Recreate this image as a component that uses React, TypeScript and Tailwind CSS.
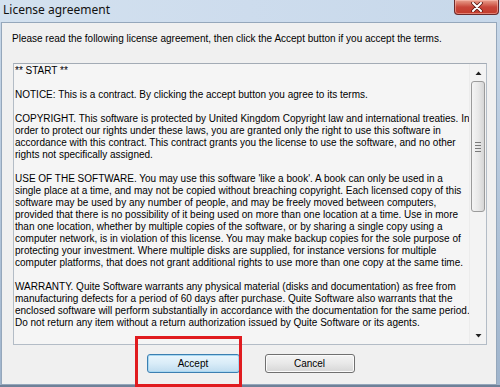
import React from "react";

const lines: string[] = [
  "** START **",
  "",
  "NOTICE: This is a contract. By clicking the accept button you agree to its terms.",
  "",
  "COPYRIGHT. This software is protected by United Kingdom Copyright law and international treaties. In",
  "order to protect our rights under these laws, you are granted only the right to use this software in",
  "accordance with this contract. This contract grants you the license to use the software, and no other",
  "rights not specifically assigned.",
  "",
  "USE OF THE SOFTWARE. You may use this software 'like a book'. A book can only be used in a",
  "single place at a time, and may not be copied without breaching copyright. Each licensed copy of this",
  "software may be used by any number of people, and may be freely moved between computers,",
  "provided that there is no possibility of it being used on more than one location at a time. Use in more",
  "than one location, whether by multiple copies of the software, or by sharing a single copy using a",
  "computer network, is in violation of this license. You may make backup copies for the sole purpose of",
  "protecting your investment. Where multiple disks are supplied, for instance versions for multiple",
  "computer platforms, that does not grant additional rights to use more than one copy at the same time.",
  "",
  "WARRANTY. Quite Software warrants any physical material (disks and documentation) as free from",
  "manufacturing defects for a period of 60 days after purchase. Quite Software also warrants that the",
  "enclosed software will perform substantially in accordance with the documentation for the same period.",
  "Do not return any item without a return authorization issued by Quite Software or its agents.",
];

function CloseButton() {
  return (
    <div className="w-[45px] h-[15px] rounded-b-[4px] border border-t-0 border-[#6b2a2a] bg-gradient-to-b from-[#e8a08f] via-[#c8463a] to-[#c23a2a] flex items-center justify-center shadow-[inset_0_0_0_1px_rgba(255,200,190,0.5)]">
      <svg width="12" height="10" viewBox="0 0 12 10">
        <path d="M2 1 L10 9 M10 1 L2 9" stroke="#5a1a14" strokeWidth="3.6" strokeLinecap="round" />
        <path d="M2 1 L10 9 M10 1 L2 9" stroke="#ffffff" strokeWidth="2" strokeLinecap="round" />
      </svg>
    </div>
  );
}

function Scrollbar() {
  return (
    <div className="w-[17px] h-full flex flex-col bg-[#f3f3f3] border-l border-[#ececec]">
      <div className="h-[17px] flex items-center justify-center">
        <svg width="7" height="4" viewBox="0 0 7 4">
          <path d="M0.5 4 L3.5 0.5 L6.5 4 Z" fill="#222" />
        </svg>
      </div>
      <div className="flex-1 flex flex-col px-[1px]">
        <div className="h-[131px] rounded-[3px] border border-[#9b9b9b] bg-gradient-to-r from-[#f4f4f4] via-[#e9e9e9] to-[#d6d6d6] flex flex-col items-center justify-center gap-[2px]">
          <div className="w-[6px] h-[1px] bg-[#7a7a7a]" />
          <div className="w-[6px] h-[1px] bg-[#7a7a7a]" />
          <div className="w-[6px] h-[1px] bg-[#7a7a7a]" />
          <div className="w-[6px] h-[1px] bg-[#7a7a7a]" />
        </div>
      </div>
      <div className="h-[17px] flex items-center justify-center">
        <svg width="7" height="4" viewBox="0 0 7 4">
          <path d="M0.5 0 L3.5 3.5 L6.5 0 Z" fill="#222" />
        </svg>
      </div>
    </div>
  );
}

export default function App() {
  const body = { fontFamily: '"Liberation Sans", Arial, sans-serif' };
  return (
    <div className="relative w-[500px] h-[387px] overflow-hidden bg-gradient-to-b from-[#c9d9ea] to-[#9fb4cc] flex flex-col">
      {/* Title bar */}
      <div className="h-[22px] flex justify-between items-start bg-gradient-to-r from-[#d3e1ef] via-[#cddced] to-[#c7d8ea]">
        <div
          className="pl-[3px] pt-[2px] text-[12px] leading-[16px] text-[#111]"
          style={{ fontFamily: '"Noto Sans", "Open Sans", sans-serif' }}
        >
          License agreement
        </div>
        <div className="mr-[1px]">
          <CloseButton />
        </div>
      </div>

      {/* Client area */}
      <div
        className="ml-[1px] w-[496px] h-[363px] bg-[#f0f0f0] border border-[#95a7bb] flex flex-col"
        style={body}
      >
        <div className="pt-[10px] pl-[10px] text-[10px] leading-[12px] text-black whitespace-nowrap">
          Please read the following license agreement, then click the Accept button if you accept the terms.
        </div>

        <div className="mt-[18px] ml-[11px] w-[474px] h-[282px] flex bg-[#f5f5f5] border border-[#b3bcc6] border-t-[#a3abb5]">
          <div className="flex-1 pt-[1px] pl-[1px] text-[10px] leading-[12px] text-black overflow-hidden">
            {lines.map((l, i) => (
              <div key={i} className="h-[12px] whitespace-nowrap">
                {l}
              </div>
            ))}
          </div>
          <Scrollbar />
        </div>

        <div className="mt-[9px] flex justify-center gap-[25px] pl-[3px]">
          <button className="w-[93px] h-[19px] rounded-[3px] border border-[#3c7fb1] bg-gradient-to-b from-[#eaf6fd] via-[#d9ecf8] to-[#bfdcef] shadow-[inset_0_0_0_1px_#a8d8f2] text-[10px] text-black">
            Accept
          </button>
          <button className="w-[90px] h-[19px] rounded-[3px] border border-[#707070] bg-gradient-to-b from-[#f4f4f4] via-[#e8e8e8] to-[#d6d6d6] shadow-[inset_0_0_0_1px_#fbfbfb] text-[10px] text-black">
            Cancel
          </button>
        </div>
      </div>

      <div className="flex-1 bg-[#6f8198]" />

      {/* Red annotation box */}
      <div className="absolute left-[135px] top-[336px] w-[107px] h-[51px] border-[3px] border-[#e01b1f]" />
    </div>
  );
}
